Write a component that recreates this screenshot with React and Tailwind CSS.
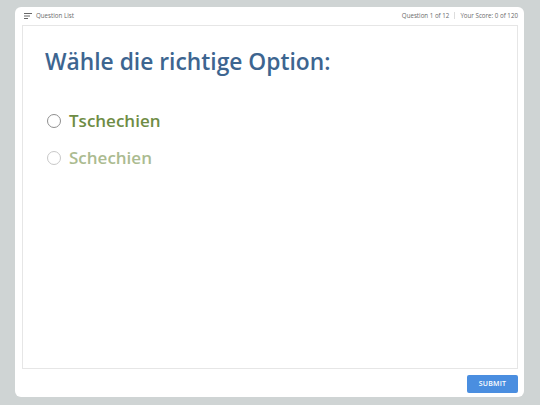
export default function App() {
  return (
    <div className="w-[540px] h-[405px] bg-[#cfd4d4] pt-[7px] pl-[15px]" style={{ fontFamily: '"Open Sans", sans-serif' }}>
      <div className="w-[509px] h-[390px] bg-white rounded-[6px] flex flex-col px-[7px] pr-[6px]">
        <div className="h-[18px] flex items-center justify-between pl-[2px] text-[6.2px] text-[#6a6a6a]">
          <div className="flex items-center gap-[4px]">
            <svg width="8" height="6" viewBox="0 0 8 6" className="text-[#555]">
              <path d="M0 0.5H8M0 3H6M0 5.5H4" stroke="currentColor" strokeWidth="0.9" />
            </svg>
            <span>Question List</span>
          </div>
          <div className="flex items-center">
            <span>Question 1 of 12</span>
            <span className="mx-[5px] w-px h-[7px] bg-[#ddd]" />
            <span>Your Score: 0 of 120</span>
          </div>
        </div>
        <div className="h-[344px] border border-[#e6e6e6] pl-[22px] pt-[20px]">
          <h1 className="text-[22.8px] leading-[32px] font-semibold text-[#3d6590]">Wähle die richtige Option:</h1>
          <div className="mt-[31px] flex flex-col gap-[14px] pl-[2px]">
            <label className="flex items-center gap-[8px]">
              <span className="w-[14px] h-[14px] rounded-full border border-[#8f8f8f]" />
              <span className="text-[17px] leading-[23px] font-semibold text-[#6e8c44]">Tschechien</span>
            </label>
            <label className="flex items-center gap-[8px]">
              <span className="w-[14px] h-[14px] rounded-full border border-[#c8c8c8]" />
              <span className="text-[17px] leading-[23px] font-semibold text-[#abbb90]">Schechien</span>
            </label>
          </div>
        </div>
        <div className="flex justify-end pt-[6px]">
          <button className="w-[51px] h-[18px] bg-[#4a8ee0] rounded-[2px] text-white text-[7px] font-semibold tracking-[0.2px]">SUBMIT</button>
        </div>
      </div>
    </div>
  );
}
